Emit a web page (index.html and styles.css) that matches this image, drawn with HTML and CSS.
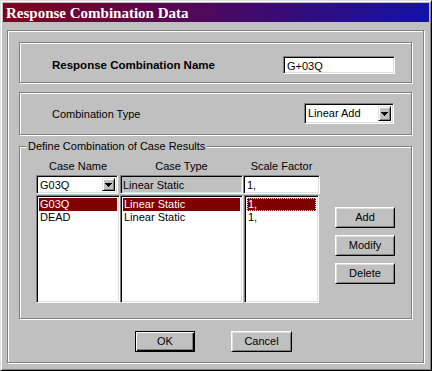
FILE: index.html
```html
<!DOCTYPE html>
<html lang="en">
<head>
<meta charset="UTF-8">
<meta name="viewport" content="width=device-width, initial-scale=1.0">
<title>Response Combination Data</title>
<link rel="stylesheet" href="styles.css">
</head>
<body>
<div class="window">
  <div class="titlebar">Response Combination Data</div>
  <div class="client">
    <div class="frame">

      <div class="panel name-panel">
        <span class="label strong">Response Combination Name</span>
        <div class="field name-field">G+03Q</div>
      </div>

      <div class="panel type-panel">
        <span class="label">Combination Type</span>
        <div class="field select type-select">
          <span class="select-text">Linear Add</span>
          <span class="drop"><svg width="7" height="4" viewBox="0 0 7 4"><path d="M0 0h7v1h-1v1h-1v1h-1v1h-1v-1h-1v-1h-1v-1h-1z"/></svg></span>
        </div>
      </div>

      <div class="group">
        <span class="legend">Define Combination of Case Results</span>
        <div class="col col-name">
          <div class="head">Case Name</div>
          <div class="field select name-combo">
            <span class="select-text">G03Q</span>
            <span class="drop"><svg width="7" height="4" viewBox="0 0 7 4"><path d="M0 0h7v1h-1v1h-1v1h-1v1h-1v-1h-1v-1h-1v-1h-1z"/></svg></span>
          </div>
          <div class="field list">
            <div class="row selected">G03Q</div>
            <div class="row">DEAD</div>
          </div>
        </div>
        <div class="col col-type">
          <div class="head">Case Type</div>
          <div class="field readonly">Linear Static</div>
          <div class="field list">
            <div class="row selected">Linear Static</div>
            <div class="row">Linear Static</div>
          </div>
        </div>
        <div class="col col-factor">
          <div class="head">Scale Factor</div>
          <div class="field entry">1,</div>
          <div class="field list">
            <div class="row selected focus">1,</div>
            <div class="row">1,</div>
          </div>
        </div>
        <div class="side">
          <div class="btn">Add</div>
          <div class="btn">Modify</div>
          <div class="btn">Delete</div>
        </div>
      </div>

      <div class="actions">
        <div class="btn default">OK</div>
        <div class="btn cancel">Cancel</div>
      </div>

    </div>
  </div>
</div>
</body>
</html>
```

FILE: styles.css
```css
body {
  margin: 0;
  background-color: #c0c0c0;
  font-family: "Liberation Sans", Arial, sans-serif;
  font-size: 11px;
  color: #000;
}

.window {
  width: 432px;
  height: 371px;
  box-sizing: border-box;
  border: 1px solid;
  border-color: #dfdfdf #000 #000 #dfdfdf;
  box-shadow: inset 1px 1px 0 #fff, inset -1px -1px 0 #808080;
  padding: 2px;
  background-color: #c0c0c0;
}

.titlebar {
  height: 19px;
  line-height: 20px;
  padding-left: 3px;
  background: linear-gradient(to right, #82001a, #1212a6);
  color: #fff;
  font-family: "Liberation Serif", "Times New Roman", serif;
  font-weight: bold;
  font-size: 15px;
}

.client {
  padding: 8px 0 0 4px;
}

/* etched boxes */
.frame,
.panel,
.group {
  box-sizing: border-box;
  border: 1px solid #808080;
  box-shadow: inset 1px 1px 0 #fff, 1px 1px 0 #fff;
}

.frame {
  width: 417px;
  height: 333px;
  padding: 11px 11px 0;
  display: flex;
  flex-direction: column;
}

.panel {
  display: flex;
  align-items: center;
  justify-content: space-between;
}

.name-panel {
  height: 41px;
  padding: 5px 16px 0 32px;
}

.type-panel {
  height: 43px;
  margin-top: 9px;
  padding: 0 17px 0 32px;
}

.label.strong {
  font-weight: bold;
  font-size: 11.5px;
}

/* sunken fields */
.field {
  box-sizing: border-box;
  border: 1px solid;
  border-color: #808080 #fff #fff #808080;
  box-shadow: inset 1px 1px 0 #000, inset -1px -1px 0 #dfdfdf;
  background-color: #fff;
  padding: 2px 2px 0 3px;
  line-height: 14px;
  white-space: nowrap;
}

.name-field {
  width: 112px;
  height: 18px;
}

.select {
  display: flex;
  padding: 2px;
}

.select-text {
  flex: 1;
  padding-left: 1px;
  line-height: 15px;
}

.drop {
  width: 13px;
  box-sizing: border-box;
  display: flex;
  align-items: center;
  justify-content: center;
  background-color: #c0c0c0;
  border: 1px solid;
  border-color: #dfdfdf #000 #000 #dfdfdf;
  box-shadow: inset 1px 1px 0 #fff, inset -1px -1px 0 #808080;
}

.type-select {
  width: 90px;
  height: 21px;
}

/* case results group */
.group {
  position: relative;
  height: 173px;
  margin-top: 11px;
  padding: 12px 0 0 16px;
  display: flex;
}

.legend {
  position: absolute;
  left: 6px;
  top: -8px;
  padding: 0 2px;
  line-height: 14px;
  background-color: #c0c0c0;
}

.col {
  display: flex;
  flex-direction: column;
}

.col-name { width: 84px; }
.col-type { width: 123px; }
.col-factor { width: 77px; }

.head {
  height: 14px;
  line-height: 14px;
  margin-bottom: 2px;
  text-align: center;
}

.col > .field:nth-child(2) {
  height: 19px;
  margin-bottom: 1px;
}

.name-combo {
  width: 82px;
}

.readonly {
  background-color: #c0c0c0;
  padding-left: 2px;
}

.list {
  height: 108px;
  padding: 2px;
}

.col-factor .list {
  margin-left: 1px;
  width: 75px;
}

.row {
  height: 13px;
  line-height: 13px;
  padding-left: 1px;
}

.row.selected {
  background-color: #800000;
  color: #fff;
}

.row.focus {
  outline: 1px dotted #e0e0e0;
  outline-offset: -1px;
}

.side {
  margin-left: 15px;
  padding-top: 48px;
  display: flex;
  flex-direction: column;
  gap: 7px;
}

/* push buttons */
.btn {
  box-sizing: border-box;
  width: 60px;
  height: 21px;
  line-height: 19px;
  text-align: center;
  border: 1px solid;
  border-color: #fff #000 #000 #fff;
  box-shadow: inset 1px 1px 0 #dfdfdf, inset -1px -1px 0 #808080;
}

.btn.default {
  border-color: #000;
  box-shadow: inset 1px 1px 0 #fff, inset -1px -1px 0 #000, inset -2px -2px 0 #808080;
}

.btn.cancel {
  width: 61px;
}

.actions {
  margin-top: 12px;
  padding-right: 4px;
  display: flex;
  justify-content: center;
  gap: 36px;
}
```
